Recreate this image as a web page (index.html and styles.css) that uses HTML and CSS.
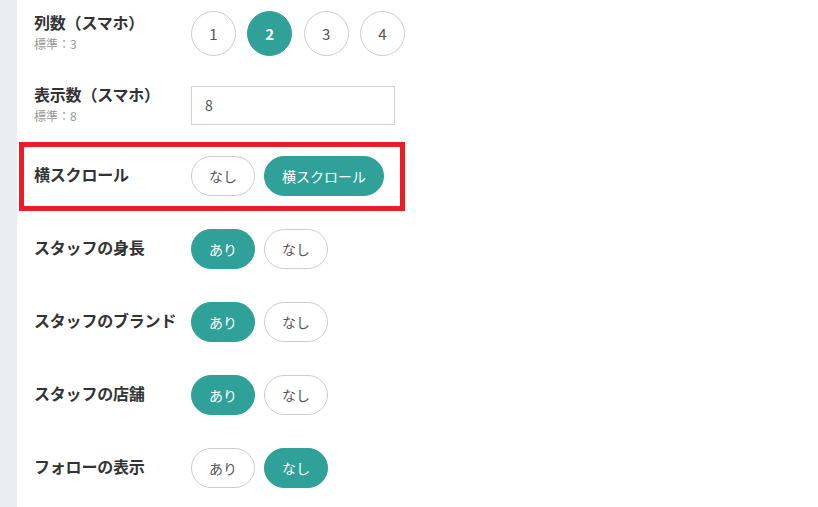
FILE: index.html
```html
<!DOCTYPE html>
<html lang="ja">
<head>
<meta charset="utf-8">
<link rel="stylesheet" href="styles.css">
</head>
<body>
<div class="page">
  <aside class="side"></aside>
  <main class="main">
    <div class="list">
      <div class="row row-tight">
        <div class="label">
          <div class="title">列数（スマホ）</div>
          <div class="sub">標準：3</div>
        </div>
        <div class="circles">
          <span class="circle">1</span>
          <span class="circle on">2</span>
          <span class="circle">3</span>
          <span class="circle">4</span>
        </div>
      </div>
      <div class="row row-tight">
        <div class="label">
          <div class="title">表示数（スマホ）</div>
          <div class="sub">標準：8</div>
        </div>
        <div class="field">8</div>
      </div>
      <div class="row highlight">
        <div class="label"><div class="title">横スクロール</div></div>
        <div class="pills">
          <span class="pill">なし</span>
          <span class="pill on">横スクロール</span>
        </div>
      </div>
      <div class="row">
        <div class="label"><div class="title">スタッフの身長</div></div>
        <div class="pills">
          <span class="pill on">あり</span>
          <span class="pill">なし</span>
        </div>
      </div>
      <div class="row">
        <div class="label"><div class="title">スタッフのブランド</div></div>
        <div class="pills">
          <span class="pill on">あり</span>
          <span class="pill">なし</span>
        </div>
      </div>
      <div class="row">
        <div class="label"><div class="title">スタッフの店舗</div></div>
        <div class="pills">
          <span class="pill on">あり</span>
          <span class="pill">なし</span>
        </div>
      </div>
      <div class="row">
        <div class="label"><div class="title">フォローの表示</div></div>
        <div class="pills">
          <span class="pill">あり</span>
          <span class="pill on">なし</span>
        </div>
      </div>
    </div>
  </main>
</div>
</body>
</html>
```
FILE: styles.css
```css
html, body {
  margin: 0;
  padding: 0;
  background: #ffffff;
  font-family: "Noto Sans CJK JP", "Noto Sans", sans-serif;
  color: #333333;
  overflow: hidden;
}

.page {
  display: flex;
  height: 507px;
}

.side {
  width: 17px;
  flex: none;
  background: #eaedf2;
}

.main {
  flex: 1;
}

.list {
  margin-top: -3px;
}

.row {
  display: flex;
  align-items: center;
  height: 73px;
  padding-left: 17px;
  box-sizing: border-box;
}

.row-tight {
  height: 72px;
}

.highlight {
  height: 69px;
  width: 386px;
  margin: 1px 0 1px 2px;
  border: 5px solid #ea1c24;
  padding-left: 10px;
  padding-bottom: 2px;
}

.label {
  width: 157px;
  flex: none;
  padding-bottom: 4px;
}

.title {
  font-size: 16px;
  font-weight: 700;
  line-height: 22px;
  color: #333333;
  letter-spacing: -0.2px;
}

.sub {
  font-size: 12px;
  line-height: 16px;
  margin-top: 3px;
  color: #999999;
}

.circles {
  display: flex;
  gap: 11.3px;
}

.circle {
  width: 45px;
  height: 45px;
  box-sizing: border-box;
  border: 1px solid #cccccc;
  border-radius: 50%;
  display: flex;
  align-items: center;
  justify-content: center;
  font-size: 15px;
  color: #555555;
}

.circle.on {
  background: #30a198;
  border-color: #30a198;
  color: #ffffff;
  font-weight: 700;
}

.field {
  width: 204px;
  height: 39px;
  box-sizing: border-box;
  border: 1px solid #cfd3dc;
  padding-left: 13px;
  display: flex;
  align-items: center;
  font-size: 14px;
  color: #555555;
}

.pills {
  display: flex;
  gap: 9px;
}

.pill {
  height: 40px;
  box-sizing: border-box;
  padding: 0 17px;
  border: 1px solid #cccccc;
  border-radius: 20px;
  display: flex;
  align-items: center;
  font-size: 14px;
  color: #555555;
  background: #ffffff;
}

.pill.on {
  background: #30a198;
  border-color: #30a198;
  color: #ffffff;
}
```
